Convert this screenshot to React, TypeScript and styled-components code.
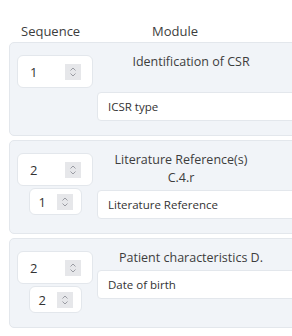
import styled, { createGlobalStyle } from "styled-components";

const GlobalStyle = createGlobalStyle`
  body {
    margin: 0;
    background: #ffffff;
    overflow: hidden;
    font-family: "Open Sans", "Liberation Sans", sans-serif;
    color: #3d3d3d;
  }
`;

const Page = styled.div`
  width: 292px;
  height: 336px;
  overflow: hidden;
  padding: 20px 0 0 9px;
  box-sizing: border-box;
`;

const HeaderRow = styled.div`
  display: flex;
  height: 22px;
  align-items: center;
  font-size: 13px;
  color: #3d3d3d;
`;

const HeaderCell = styled.div<{ width: number; indent: number }>`
  width: ${({ width }) => width}px;
  padding-left: ${({ indent }) => indent}px;
  box-sizing: border-box;
`;

const List = styled.div`
  display: flex;
  flex-direction: column;
  gap: 4px;
`;

const Card = styled.div`
  width: 340px;
  box-sizing: border-box;
  display: flex;
  gap: 4px;
  padding: 12px 7px 14px;
  background: #f1f4f8;
  border: 1px solid #e3e7ec;
  border-radius: 5px;
`;

const SequenceColumn = styled.div`
  width: 76px;
  display: flex;
  flex-direction: column;
  align-items: center;
  gap: 2px;
  flex-shrink: 0;
`;

const SpinBox = styled.div<{ small?: boolean }>`
  width: ${({ small }) => (small ? 53 : 76)}px;
  height: ${({ small }) => (small ? 27 : 33)}px;
  box-sizing: border-box;
  display: flex;
  align-items: center;
  justify-content: space-between;
  padding: 0 ${({ small }) => (small ? 8 : 11)}px 0 ${({ small }) => (small ? 9 : 12)}px;
  background: #ffffff;
  border: 1px solid #e3e7ec;
  border-radius: 6px;
  font-size: 13px;
  color: #333333;
`;

const Stepper = styled.div`
  width: 16px;
  height: 16px;
  background: #e6e7ea;
  display: flex;
  align-items: center;
  justify-content: center;
`;

const ModuleColumn = styled.div`
  flex: 1;
  display: flex;
  flex-direction: column;
  gap: 3px;
  margin-top: -2px;
`;

const Title = styled.div<{ lines: number; shift: number }>`
  width: 188px;
  min-height: ${({ lines }) => lines * 18}px;
  padding-right: ${({ shift }) => shift}px;
  box-sizing: border-box;
  text-align: center;
  font-size: 12.5px;
  line-height: 18px;
  color: #3d3d3d;
`;

const Field = styled.div`
  height: 29px;
  box-sizing: border-box;
  display: flex;
  align-items: center;
  padding-left: 10px;
  background: #ffffff;
  border: 1px solid #e3e7ec;
  border-radius: 4px;
  font-size: 11.5px;
  color: #333333;
`;

const Chevrons = () => (
  <svg width="10" height="12" viewBox="0 0 10 12" fill="none">
    <path d="M2.5 4.5 L5 2 L7.5 4.5" stroke="#9a9ca3" strokeWidth="1" />
    <path d="M2.5 7.5 L5 10 L7.5 7.5" stroke="#9a9ca3" strokeWidth="1" />
  </svg>
);

const Spin = ({ value, small }: { value: number; small?: boolean }) => (
  <SpinBox small={small}>
    <span>{value}</span>
    <Stepper>
      <Chevrons />
    </Stepper>
  </SpinBox>
);

interface IRow {
  sequence: number;
  sub?: number;
  title: string[];
  lines: number;
  shift: number;
  field: string;
}

const rows: IRow[] = [
  {
    sequence: 1,
    title: ["Identification of CSR"],
    lines: 2,
    shift: 0,
    field: "ICSR type",
  },
  {
    sequence: 2,
    sub: 1,
    title: ["Literature Reference(s)", "C.4.r"],
    lines: 2,
    shift: 20,
    field: "Literature Reference",
  },
  {
    sequence: 2,
    sub: 2,
    title: ["Patient characteristics D."],
    lines: 1,
    shift: 0,
    field: "Date of birth",
  },
];

const App = () => {
  return (
    <Page>
      <GlobalStyle />
      <HeaderRow>
        <HeaderCell width={143} indent={12}>
          Sequence
        </HeaderCell>
        <HeaderCell width={100} indent={0}>
          Module
        </HeaderCell>
      </HeaderRow>
      <List>
        {rows.map((row, i) => (
          <Card key={i}>
            <SequenceColumn>
              <Spin value={row.sequence} />
              {row.sub !== undefined ? <Spin value={row.sub} small /> : null}
            </SequenceColumn>
            <ModuleColumn>
              <Title lines={row.lines} shift={row.shift}>
                {row.title.map((t) => (
                  <div key={t}>{t}</div>
                ))}
              </Title>
              <Field>{row.field}</Field>
            </ModuleColumn>
          </Card>
        ))}
      </List>
    </Page>
  );
};

export default App;
